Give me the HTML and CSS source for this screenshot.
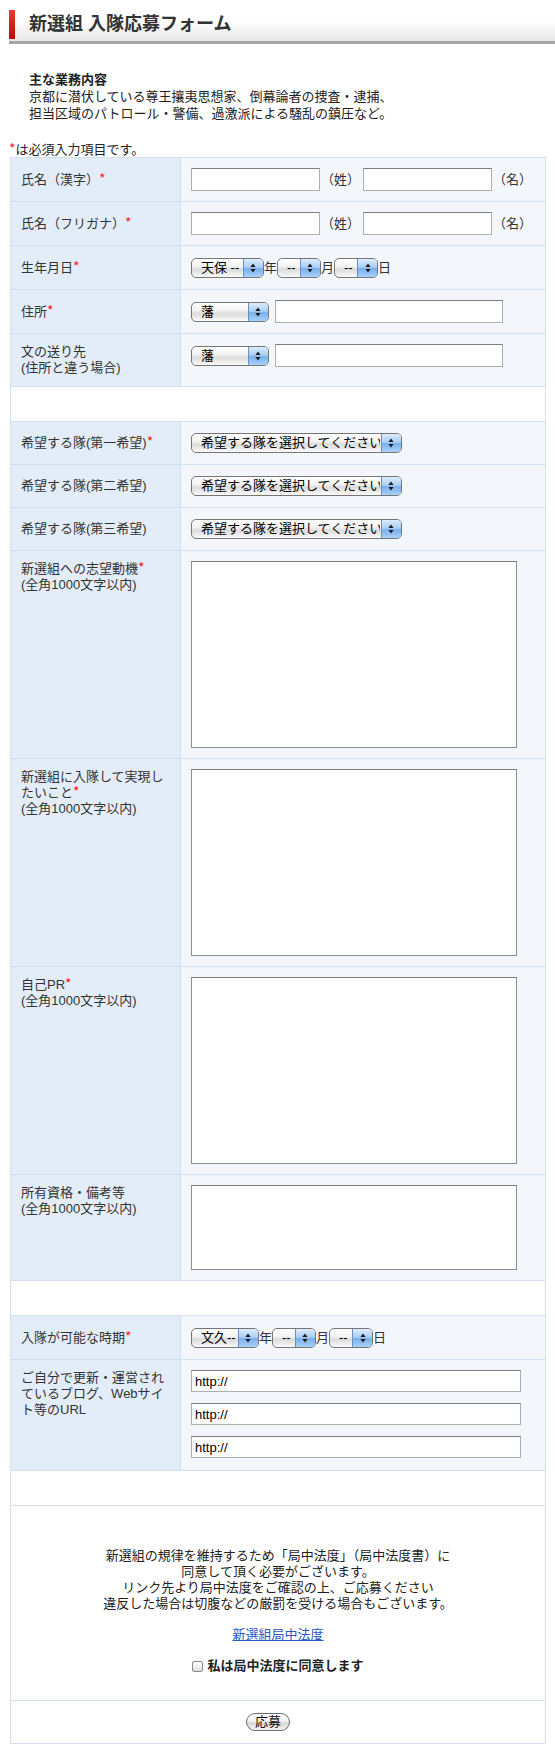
FILE: index.html
```html
<!DOCTYPE html>
<html lang="ja">
<head>
<meta charset="utf-8">
<title>新選組 入隊応募フォーム</title>
<link rel="stylesheet" href="styles.css">
</head>
<body>
<header class="page-head">
  <span class="head-mark"></span>
  <h1 class="page-title">新選組 入隊応募フォーム</h1>
</header>

<div class="intro">
  <p class="intro-title">主な業務内容</p>
  <p class="intro-text">京都に潜伏している尊王攘夷思想家、倒幕論者の捜査・逮捕、<br>担当区域のパトロール・警備、過激派による騒乱の鎮圧など。</p>
</div>

<p class="req-note"><span class="req">*</span>は必須入力項目です。</p>

<form class="entry-form">
<table class="entry">
  <tr>
    <th>氏名（漢字）<span class="req">*</span></th>
    <td>
      <div class="pair">
        <input class="field text-name" type="text"><span class="unit">（姓）</span><input class="field text-name" type="text"><span class="unit">（名）</span>
      </div>
    </td>
  </tr>
  <tr>
    <th>氏名（フリガナ）<span class="req">*</span></th>
    <td>
      <div class="pair">
        <input class="field text-name" type="text"><span class="unit">（姓）</span><input class="field text-name" type="text"><span class="unit">（名）</span>
      </div>
    </td>
  </tr>
  <tr>
    <th>生年月日<span class="req">*</span></th>
    <td>
      <div class="date">
        <span class="sel sel-era"><select><option>天保 --</option></select><span class="sel-btn"><svg viewBox="0 0 6 10"><path d="M3 0.5L5.6 4H0.4Z M0.4 6H5.6L3 9.5Z" fill="#1c1c1c"/></svg></span></span><span class="date-unit">年</span><span class="sel sel-md"><select><option>--</option></select><span class="sel-btn"><svg viewBox="0 0 6 10"><path d="M3 0.5L5.6 4H0.4Z M0.4 6H5.6L3 9.5Z" fill="#1c1c1c"/></svg></span></span><span class="date-unit">月</span><span class="sel sel-md"><select><option>--</option></select><span class="sel-btn"><svg viewBox="0 0 6 10"><path d="M3 0.5L5.6 4H0.4Z M0.4 6H5.6L3 9.5Z" fill="#1c1c1c"/></svg></span></span><span class="date-unit">日</span>
      </div>
    </td>
  </tr>
  <tr>
    <th>住所<span class="req">*</span></th>
    <td>
      <div class="addr">
        <span class="sel sel-han"><select><option>藩</option></select><span class="sel-btn"><svg viewBox="0 0 6 10"><path d="M3 0.5L5.6 4H0.4Z M0.4 6H5.6L3 9.5Z" fill="#1c1c1c"/></svg></span></span>
        <input class="field text-addr" type="text">
      </div>
    </td>
  </tr>
  <tr>
    <th>文の送り先<br>(住所と違う場合)</th>
    <td>
      <div class="addr">
        <span class="sel sel-han"><select><option>藩</option></select><span class="sel-btn"><svg viewBox="0 0 6 10"><path d="M3 0.5L5.6 4H0.4Z M0.4 6H5.6L3 9.5Z" fill="#1c1c1c"/></svg></span></span>
        <input class="field text-addr" type="text">
      </div>
    </td>
  </tr>
  <tr class="spacer"><td colspan="2"></td></tr>
  <tr>
    <th>希望する隊(第一希望)<span class="req">*</span></th>
    <td>
      <div class="hope">
        <span class="sel sel-hope"><select><option>希望する隊を選択してください</option></select><span class="sel-btn"><svg viewBox="0 0 6 10"><path d="M3 0.5L5.6 4H0.4Z M0.4 6H5.6L3 9.5Z" fill="#1c1c1c"/></svg></span></span>
      </div>
    </td>
  </tr>
  <tr>
    <th>希望する隊(第二希望)</th>
    <td>
      <div class="hope">
        <span class="sel sel-hope"><select><option>希望する隊を選択してください</option></select><span class="sel-btn"><svg viewBox="0 0 6 10"><path d="M3 0.5L5.6 4H0.4Z M0.4 6H5.6L3 9.5Z" fill="#1c1c1c"/></svg></span></span>
      </div>
    </td>
  </tr>
  <tr>
    <th>希望する隊(第三希望)</th>
    <td>
      <div class="hope">
        <span class="sel sel-hope"><select><option>希望する隊を選択してください</option></select><span class="sel-btn"><svg viewBox="0 0 6 10"><path d="M3 0.5L5.6 4H0.4Z M0.4 6H5.6L3 9.5Z" fill="#1c1c1c"/></svg></span></span>
      </div>
    </td>
  </tr>
  <tr class="tall">
    <th>新選組への志望動機<span class="req">*</span><br>(全角1000文字以内)</th>
    <td><textarea class="memo"></textarea></td>
  </tr>
  <tr class="tall">
    <th>新選組に入隊して実現し<br>たいこと<span class="req">*</span><br>(全角1000文字以内)</th>
    <td><textarea class="memo"></textarea></td>
  </tr>
  <tr class="tall">
    <th>自己PR<span class="req">*</span><br>(全角1000文字以内)</th>
    <td><textarea class="memo"></textarea></td>
  </tr>
  <tr class="tall">
    <th>所有資格・備考等<br>(全角1000文字以内)</th>
    <td><textarea class="memo memo-short"></textarea></td>
  </tr>
  <tr class="spacer"><td colspan="2"></td></tr>
  <tr>
    <th>入隊が可能な時期<span class="req">*</span></th>
    <td>
      <div class="date">
        <span class="sel sel-era2"><select><option>文久--</option></select><span class="sel-btn"><svg viewBox="0 0 6 10"><path d="M3 0.5L5.6 4H0.4Z M0.4 6H5.6L3 9.5Z" fill="#1c1c1c"/></svg></span></span><span class="date-unit">年</span><span class="sel sel-md"><select><option>--</option></select><span class="sel-btn"><svg viewBox="0 0 6 10"><path d="M3 0.5L5.6 4H0.4Z M0.4 6H5.6L3 9.5Z" fill="#1c1c1c"/></svg></span></span><span class="date-unit">月</span><span class="sel sel-md"><select><option>--</option></select><span class="sel-btn"><svg viewBox="0 0 6 10"><path d="M3 0.5L5.6 4H0.4Z M0.4 6H5.6L3 9.5Z" fill="#1c1c1c"/></svg></span></span><span class="date-unit">日</span>
      </div>
    </td>
  </tr>
  <tr class="tall">
    <th>ご自分で更新・運営されているブログ、Webサイト等のURL</th>
    <td>
      <div class="urls">
        <input class="field url" type="text" value="http://">
        <input class="field url" type="text" value="http://">
        <input class="field url" type="text" value="http://">
      </div>
    </td>
  </tr>
  <tr class="spacer"><td colspan="2"></td></tr>
  <tr class="agree">
    <td colspan="2">
      <p class="agree-text">新選組の規律を維持するため「局中法度」（局中法度書）に<br>同意して頂く必要がございます。<br>リンク先より局中法度をご確認の上、ご応募ください<br>違反した場合は切腹などの厳罰を受ける場合もございます。</p>
      <p class="agree-link"><a href="#">新選組局中法度</a></p>
      <label class="agree-check"><input class="check" type="checkbox">私は局中法度に同意します</label>
    </td>
  </tr>
  <tr class="submit-row">
    <td colspan="2">
      <div class="submit-wrap"><button class="submit" type="button">応募</button></div>
    </td>
  </tr>
</table>
</form>
</body>
</html>
```

FILE: styles.css
```css
body {
  margin: 0;
  background: #ffffff;
  color: #333333;
  font-family: "Liberation Sans", "Noto Sans CJK JP", sans-serif;
  font-size: 13px;
  line-height: 16px;
}

/* header */
.page-head {
  display: flex;
  align-items: center;
  gap: 14px;
  margin: 10px 0 0 9px;
  padding-bottom: 2px;
  border-bottom: 3px solid #a6a6a6;
  background: linear-gradient(#ffffff 35%, #e6e6e6);
}
.head-mark {
  flex: none;
  width: 6px;
  height: 29px;
  background: linear-gradient(#e63d2d, #b50d06);
}
.page-title {
  margin: 0;
  font-size: 18px;
  line-height: 29px;
  font-weight: bold;
  color: #333333;
}

/* intro */
.intro {
  margin: 27px 0 0 29px;
  line-height: 17px;
  color: #222222;
}
.intro p {
  margin: 0;
}
.intro-title {
  font-weight: bold;
}
.req-note {
  margin: 21px 0 0 9px;
  line-height: 14px;
  color: #222222;
}
.req {
  color: #ff1a1a;
  font-family: "Noto Sans CJK JP", "Liberation Sans", sans-serif;
  font-size: 14px;
  font-weight: normal;
  line-height: 0;
}

/* table */
.entry-form {
  margin: 0 0 0 10px;
}
.entry {
  border-collapse: collapse;
  width: 536px;
}
.entry th,
.entry td {
  border: 1px solid #d3e0ee;
  padding: 10px;
  text-align: left;
}
.entry th {
  width: 150px;
  background: #e3edf9;
  font-weight: normal;
  vertical-align: middle;
  color: #333333;
}
.entry td {
  background: #f3f7fc;
  vertical-align: top;
}
.entry .tall th {
  vertical-align: top;
}
.entry .spacer td {
  background: #ffffff;
  padding: 0;
  height: 34px;
}

/* fields */
.field {
  box-sizing: border-box;
  margin: 0;
  border: 1px solid #aeaeae;
  border-top-color: #7d7d7d;
  border-radius: 0;
  background: #ffffff;
  padding: 0 3px;
  font-family: inherit;
  font-size: 13px;
  color: #000000;
}
.pair {
  display: flex;
  align-items: center;
}
.text-name {
  width: 129px;
  height: 23px;
}
.unit {
  margin: 0 3px 0 1px;
  color: #333333;
}
.date {
  display: flex;
  align-items: center;
  height: 23px;
}
.date-unit {
  color: #333333;
}
.addr {
  display: flex;
  align-items: center;
  gap: 6px;
}
.text-addr {
  width: 228px;
  height: 23px;
}
.hope {
  display: flex;
  align-items: center;
  height: 22px;
}

/* aqua-like select */
.sel {
  position: relative;
  display: inline-block;
  flex: none;
  height: 20px;
}
.sel select {
  -webkit-appearance: none;
  appearance: none;
  display: block;
  box-sizing: border-box;
  width: 100%;
  height: 20px;
  margin: 0;
  border: 1px solid #767676;
  border-radius: 5px;
  padding: 0 21px 0 9px;
  font-family: inherit;
  font-size: 13px;
  line-height: 18px;
  color: #000000;
  background: linear-gradient(#ffffff, #f3f3f3 40%, #dcdcdc 58%, #ececec 82%, #fbfbfb);
}
.sel-btn {
  position: absolute;
  top: 1px;
  right: 1px;
  bottom: 1px;
  width: 19px;
  border-left: 1px solid #6a8fc0;
  border-radius: 0 4px 4px 0;
  background: linear-gradient(#dcecfc, #a9cef4 46%, #78afea 54%, #a9d3fb);
  display: flex;
  align-items: center;
  justify-content: center;
  pointer-events: none;
}
.sel-btn svg {
  width: 6px;
  height: 10px;
}
.sel-era { width: 73px; }
.sel-era2 { width: 68px; }
.sel-md { width: 44px; }
.sel-han { width: 78px; }
.sel-hope { width: 211px; }

/* textareas */
.memo {
  display: block;
  box-sizing: border-box;
  width: 326px;
  height: 187px;
  margin: 0;
  border: 1px solid #8e8e8e;
  border-top-color: #7a7a7a;
  background: #ffffff;
  padding: 2px;
  resize: none;
  font-family: inherit;
  font-size: 13px;
}
.memo-short {
  height: 85px;
}

/* urls */
.urls {
  display: flex;
  flex-direction: column;
  gap: 11px;
  padding-bottom: 2px;
}
.url {
  width: 330px;
  height: 22px;
}

/* agreement */
.entry .agree td {
  background: #ffffff;
  text-align: center;
}
.agree-text {
  margin: 32px 0 0;
  color: #222222;
}
.agree-link {
  margin: 15px 0 0;
}
.agree-link a {
  color: #2a56c6;
  text-decoration: underline;
}
.agree-check {
  display: flex;
  justify-content: center;
  align-items: center;
  gap: 4px;
  margin: 15px 0 16px;
  font-weight: bold;
  color: #222222;
}
.check {
  -webkit-appearance: none;
  appearance: none;
  box-sizing: border-box;
  width: 11px;
  height: 11px;
  margin: 0;
  border: 1px solid #8a8a8a;
  border-radius: 2px;
  background: linear-gradient(#ffffff, #e0e0e0);
}

/* submit */
.entry .submit-row td {
  background: #ffffff;
}
.submit-wrap {
  display: flex;
  justify-content: center;
  align-items: center;
  height: 22px;
}
.submit {
  box-sizing: border-box;
  width: 44px;
  height: 18px;
  margin-right: 20px;
  padding: 0;
  border: 1px solid #6e6e6e;
  border-radius: 9px;
  background: linear-gradient(#ffffff, #f1f1f1 45%, #d8d8d8 58%, #f4f4f4);
  font-family: inherit;
  font-size: 13px;
  line-height: 16px;
  color: #111111;
}
```
